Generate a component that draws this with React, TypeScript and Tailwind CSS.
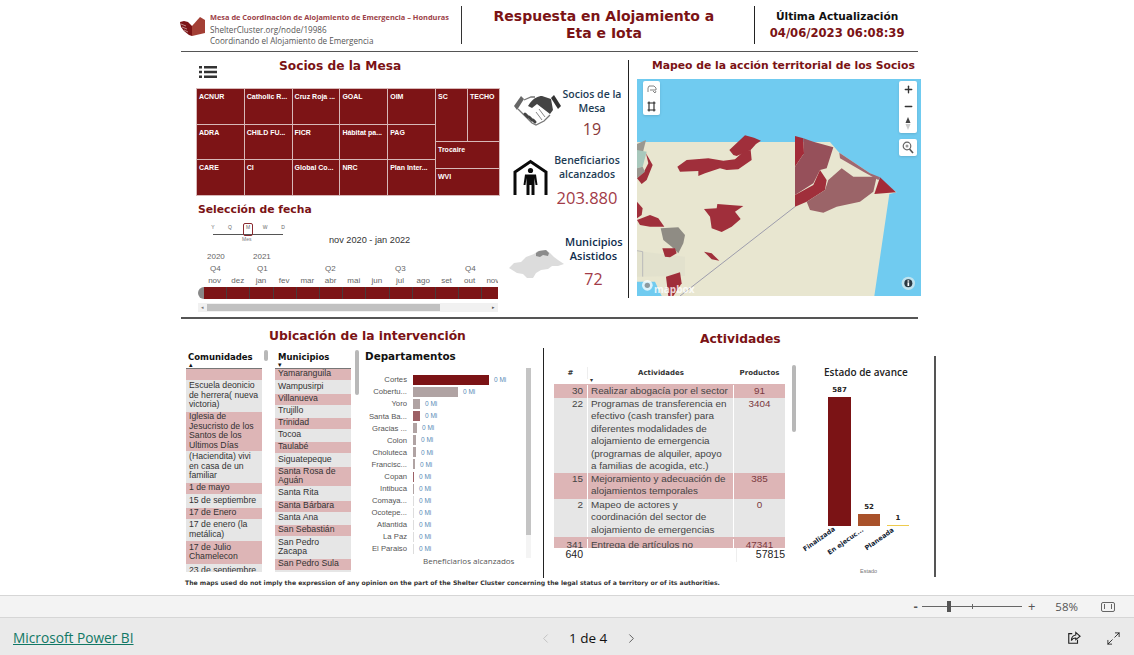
import { ChevronLeft, ChevronRight, Maximize2, Plus, Minus } from 'lucide-react'

const partners = [
  ['ACNUR', 'Catholic R...', 'Cruz Roja ...', 'GOAL', 'OIM'],
  ['ADRA', 'CHILD FU...', 'FICR', 'Hábitat pa...', 'PAG'],
  ['CARE', 'CI', 'Global Co...', 'NRC', 'Plan Inter...'],
]

const months = ['nov', 'dez', 'jan', 'fev', 'mar', 'abr', 'mai', 'jun', 'jul', 'ago', 'set', 'out', 'nov']

const comunidades = [
  { t: '', h: 'h-[11px]' },
  { t: 'Escuela deonicio de herrera( nueva victoria)', h: 'h-[32px]' },
  { t: 'Iglesia de Jesucristo de los Santos de los Ultimos Días', h: 'h-[39px]' },
  { t: '(Haciendita) vivi en casa de un familiar', h: 'h-[32px]' },
  { t: '1 de mayo', h: 'h-[11px]' },
  { t: '15 de septiembre', h: 'h-[14px]' },
  { t: '17 de Enero', h: 'h-[11px]' },
  { t: '17 de enero (la metálica)', h: 'h-[22px]' },
  { t: '17 de Julio Chamelecon', h: 'h-[23px]' },
  { t: '23 de septiembre', h: 'h-[14px]' },
]

const municipios = [
  { t: 'Yamaranguila', h: 'h-[11px]' },
  { t: 'Wampusirpi', h: 'h-[14px]' },
  { t: 'Villanueva', h: 'h-[11px]' },
  { t: 'Trujillo', h: 'h-[13px]' },
  { t: 'Trinidad', h: 'h-[11px]' },
  { t: 'Tocoa', h: 'h-[13px]' },
  { t: 'Taulabé', h: 'h-[11px]' },
  { t: 'Siguatepeque', h: 'h-[14px]' },
  { t: 'Santa Rosa de Aguán', h: 'h-[19px]' },
  { t: 'Santa Rita', h: 'h-[15px]' },
  { t: 'Santa Bárbara', h: 'h-[11px]' },
  { t: 'Santa Ana', h: 'h-[13px]' },
  { t: 'San Sebastián', h: 'h-[11px]' },
  { t: 'San Pedro Zacapa', h: 'h-[23px]' },
  { t: 'San Pedro Sula', h: 'h-[11px]' },
  { t: '', h: 'h-[2px]' },
]

const departamentos = [
  { n: 'Cortes', w: 'w-[76px]', c: 'bg-[#7b1315]' },
  { n: 'Cobertu...', w: 'w-[45px]', c: 'bg-[#b0a3a3]' },
  { n: 'Yoro', w: 'w-[7px]', c: 'bg-[#b0a3a3]' },
  { n: 'Santa Ba...', w: 'w-[7px]', c: 'bg-[#9c6065]' },
  { n: 'Gracias ...', w: 'w-[4px]', c: 'bg-[#b0a3a3]' },
  { n: 'Colon', w: 'w-[3px]', c: 'bg-[#b0a3a3]' },
  { n: 'Choluteca', w: 'w-[3px]', c: 'bg-[#b0a3a3]' },
  { n: 'Francisc...', w: 'w-[2px]', c: 'bg-[#b0a3a3]' },
  { n: 'Copan', w: 'w-[1px]', c: 'bg-[#9c6065]' },
  { n: 'Intibuca', w: 'w-[1px]', c: 'bg-[#b0a3a3]' },
  { n: 'Comaya...', w: 'w-[1px]', c: 'bg-[#dddddd]' },
  { n: 'Ocotepe...', w: 'w-[1px]', c: 'bg-[#dddddd]' },
  { n: 'Atlantida', w: 'w-[1px]', c: 'bg-[#dddddd]' },
  { n: 'La Paz', w: 'w-[1px]', c: 'bg-[#dddddd]' },
  { n: 'El Paraiso', w: 'w-[1px]', c: 'bg-[#dddddd]' },
]

const actividades = [
  { id: '30', t: 'Realizar abogacía por el sector', p: '91', h: 'h-[14px] pt-[1px]', pink: true },
  { id: '22', t: 'Programas de transferencia en efectivo (cash transfer) para diferentes modalidades de alojamiento de emergencia (programas de alquiler, apoyo a familias de acogida, etc.)', p: '3404', h: 'h-[75px]', pink: false },
  { id: '15', t: 'Mejoramiento y adecuación de alojamientos temporales', p: '385', h: 'h-[26px]', pink: true },
  { id: '2', t: 'Mapeo de actores y coordinación del sector de alojamiento de emergencias', p: '0', h: 'h-[38px]', pink: false },
  { id: '341', t: 'Entrega de artículos no alimentarios', p: '47341', h: 'h-[11px] pt-[2px]', pink: true },
]

function Logo() {
  return (
    <svg width="25" height="20" viewBox="0 0 25 20" className="mb-[6px] shrink-0">
      <path d="M0 6 L4 5 L8 6 L12 10 L12 20 L9 19 L4 15 L1 11 Z" fill="#7b1315" />
      <path d="M1 8 L6 10 M2 11 L7 13 M4 14 L8 16" stroke="#fff" strokeWidth="0.5" />
      <path d="M12 10 L20 1 L25 4 L25 17 L12 20 Z" fill="#a33f35" />
    </svg>
  )
}

function HandshakeIcon() {
  return (
    <svg width="48" height="36" viewBox="0 0 48 36" className="shrink-0">
      <path d="M0 13 L7 3 L10 6 L3 17 Z" fill="#666" />
      <path d="M40 2 L47 13 L44 16 L37 5 Z" fill="#333" />
      <path d="M37 6 L28 3 C24 3 20 5 16 10 L14 13 L18 15 L23 11 L36 21 L39 17 Z" fill="#444" />
      <path d="M10 7 L17 4 L21 4 M4 16 L8 20 L18 30 L22 32 L30 28 L36 22" fill="none" stroke="#777" strokeWidth="1.3" />
      <path d="M11 21 L14 24 M15 24 L18 27 M19 27 L21 29" stroke="#444" strokeWidth="3" strokeLinecap="round" />
      <path d="M25 16 L31 24 M22 19 L28 27" stroke="#888" strokeWidth="1" />
    </svg>
  )
}

function HouseIcon() {
  return (
    <svg width="35" height="37" viewBox="0 0 35 37">
      <path d="M2 36 V13 L17.5 2.5 L33 13 V36" fill="none" stroke="#0a0a0a" strokeWidth="3" />
      <circle cx="17.5" cy="11.5" r="2.6" fill="#0a0a0a" />
      <path d="M12 15.5 H23 L24.5 26 H22.5 L21.5 19 V36 H18.5 V26 H16.5 V36 H13.5 V19 L12.5 26 H10.5 Z" fill="#0a0a0a" />
    </svg>
  )
}

function HondurasIcon() {
  return (
    <svg width="57" height="30" viewBox="0 0 57 30">
      <path d="M1 19 L6 14 L13 13 L18 8 L26 5 L30 2 L38 1 L42 4 L46 8 L50 11 L56 15 L50 17 L44 17 L40 20 L33 21 L28 24 L25 29 L19 29 L15 25 L9 24 Z" fill="#dcdcdc" />
      <path d="M28 4 L31 2 L38 1 L41 4 L40 7 L35 6 L32 8 L28 7 Z" fill="#8b8b8b" />
    </svg>
  )
}

function TerritoryMap() {
  return (
    <svg width="284" height="217" viewBox="21 27 852 651" className="block">
      <rect x="21" y="27" width="852" height="651" fill="#70cbf0" />
      <path d="M21 216 L600 216 L628 248 L720 310 L800 367 L778 372 L733 678 L95 678 L75 635 L21 635 Z" fill="#e8e6d0" />
      <path d="M21 543 L165 560 L165 618 L21 620 Z" fill="#e2e1cd" />
      <path d="M21 542 L38 545 L38 620" fill="none" stroke="#a6a6b0" strokeWidth="2" />
      <path d="M495 410 L150 678" stroke="#8e8ea5" strokeWidth="2.5" fill="none" />
      <path d="M21 222 L48 210 L38 250 L21 262 Z" fill="#9a9890" />
      <path d="M21 240 L50 245 L38 290 L21 295 Z" fill="#a8c8bc" />
      <path d="M48 250 L68 285 L50 330 L35 342 L21 325 L42 305 L55 280 Z" fill="#a02f3b" />
      <path d="M21 295 L38 290 L45 305 L21 325 Z" fill="#9a9890" />
      <path d="M298 240 L345 196 L372 203 L393 212 L378 222 L362 240 L320 258 L310 255 Z" fill="#a02f3b" />
      <path d="M142 290 L170 270 L235 265 L280 272 L315 268 L340 245 L362 240 L365 270 L325 298 L290 300 L270 295 L225 310 L205 318 L205 303 L150 305 Z" fill="#a02f3b" />
      <path d="M222 417 L260 415 L262 402 L300 405 L340 408 L315 425 L332 447 L305 470 L275 486 L245 475 L240 440 Z" fill="#a02f3b" />
      <path d="M21 395 L38 415 L35 435 L21 445 Z" fill="#a02f3b" />
      <path d="M21 450 L60 435 L85 445 L103 470 L60 470 L30 465 Z" fill="#a02f3b" />
      <path d="M92 475 L145 472 L165 495 L160 520 L145 550 L125 530 L100 510 Z" fill="#8f8c84" />
      <path d="M97 535 L135 535 L140 550 L120 562 L105 560 Z" fill="#a02f3b" />
      <path d="M222 545 L245 550 L268 572 L245 568 Z" fill="#a02f3b" />
      <path d="M108 620 L150 607 L155 640 L130 678 L115 678 Z" fill="#a02f3b" />
      <path d="M495 198 L520 205 L522 250 L495 290 Z" fill="#a32b38" />
      <path d="M495 290 L522 250 L520 205 L550 215 L610 232 L590 295 L570 300 L550 340 L495 375 Z" fill="#96505a" />
      <path d="M495 375 L550 345 L570 300 L590 330 L585 360 L530 395 L495 410 Z" fill="#a02f3b" />
      <path d="M530 395 L585 360 L595 330 L635 295 L670 320 L700 320 L740 320 L730 365 L690 395 L620 410 L580 428 L540 420 Z" fill="#9b6468" />
      <path d="M750 322 L798 367 L733 372 Z" fill="#a32b38" />
      <path d="M628 248 L720 310 L750 322 L745 330 L700 305 L630 265 Z" fill="#a06870" />
      <circle cx="52" cy="646" r="16" fill="#ffffff" fillOpacity="0.75" />
      <circle cx="52" cy="646" r="8" fill="#8d9aa0" />
      <circle cx="835" cy="640" r="20" fill="#bfe3ef" />
      <circle cx="835" cy="640" r="12" fill="#2a3a44" />
      <rect x="832.5" y="637" width="5" height="11" fill="#ffffff" />
      <rect x="832.5" y="631" width="5" height="4" fill="#ffffff" />
    </svg>
  )
}

function ListRows({ rows }: { rows: { t: string; h: string }[] }) {
  return (
    <div className="h-[203px] overflow-hidden">
      {rows.map((r, i) => (
        <div
          key={i}
          className={`${r.h} overflow-hidden px-[3px] text-[8.7px] leading-[9.5px] text-[#333] flex items-center ${i % 2 === 0 ? 'bg-[#ddb5b6]' : 'bg-[#e6e6e6]'}`}
        >
          <span>{r.t}</span>
        </div>
      ))}
    </div>
  )
}

function App() {
  return (
    <div className="flex h-[655px] w-[1134px] flex-col overflow-hidden bg-white font-['Liberation_Sans',sans-serif]">
      <div className="relative h-[595px] pl-[180px]">
        {/* header */}
        <div className="flex h-[50.5px] w-[738px] items-center">
          <div className="flex w-[281px] items-center gap-[5px] pt-[8px]">
            <Logo />
            <div className="font-['Open_Sans',sans-serif] text-[8.1px] leading-[11.5px] text-[#555]">
              <div className="whitespace-nowrap text-[7.4px] font-bold text-[#9c4248]">Mesa de Coordinación de Alojamiento de Emergencia – Honduras</div>
              <div>ShelterCluster.org/node/19986</div>
              <div>Coordinando el Alojamiento de Emergencia</div>
            </div>
          </div>
          <div className="h-[38px] w-[1px] bg-[#333]" />
          <div className="w-[293px] pb-[1px] pr-[8px] text-center font-['DejaVu_Sans',sans-serif] text-[14px] font-bold leading-[16.5px] text-[#7b1315]">
            Respuesta en Alojamiento a<br />Eta e Iota
          </div>
          <div className="h-[38px] w-[1px] bg-[#222]" />
          <div className="w-[163px] pl-[1px] text-center font-['DejaVu_Sans',sans-serif] font-bold">
            <div className="text-[10.6px] leading-[17px] text-[#111]">Última Actualización</div>
            <div className="text-[11.6px] leading-[17px] text-[#7b1315]">04/06/2023 06:08:39</div>
          </div>
        </div>
        <div className="ml-[1px] h-[1.5px] w-[737px] bg-[#555]" />

        {/* partners, date slicer, stats, map */}
        <div className="flex h-[265px] w-[760px]">
          <div className="w-[320px] shrink-0 pl-[16px]">
            <div className="relative h-[36px]">
              <svg width="18" height="12" viewBox="0 0 18 12" className="absolute left-[3px] top-[14px]">
                <path d="M0 0h3v2.5H0zM5 0h13v2.5H5zM0 4.7h3v2.5H0zM5 4.7h13v2.5H5zM0 9.4h3v2.5H0zM5 9.4h13v2.5H5z" fill="#333" />
              </svg>
              <div className="pl-[83px] pt-[5px] font-['DejaVu_Sans',sans-serif] text-[12.2px] font-bold text-[#7b1315]">Socios de la Mesa</div>
            </div>
            <div className="flex h-[108px] w-[304px] border-b border-r border-[#d8b8b8] text-[7px] font-bold text-white">
              <div className="grid w-[240px] grid-cols-5 grid-rows-3">
                {partners.flat().map(p => (
                  <div key={p} className="overflow-hidden border-l border-t border-[#d8b8b8] bg-[#7d1416] px-[2px] pt-[3px]">{p}</div>
                ))}
              </div>
              <div className="flex w-[64px] flex-col">
                <div className="flex h-[54px]">
                  <div className="w-[32px] border-l border-t border-[#d8b8b8] bg-[#7d1416] px-[2px] pt-[3px]">SC</div>
                  <div className="w-[32px] border-l border-t border-[#d8b8b8] bg-[#7d1416] px-[2px] pt-[3px]">TECHO</div>
                </div>
                <div className="h-[27px] border-l border-t border-[#d8b8b8] bg-[#7d1416] px-[2px] pt-[3px]">Trocaire</div>
                <div className="h-[27px] border-l border-t border-[#d8b8b8] bg-[#7d1416] px-[2px] pt-[3px]">WVI</div>
              </div>
            </div>
            <div className="pl-[2px] pt-[7px] font-['DejaVu_Sans',sans-serif] text-[10.8px] font-bold leading-[14px] text-[#7b1315]">Selección de fecha</div>
            <div className="relative h-[34px] w-[304px]">
              <div className="absolute left-[17px] top-[17px] h-px w-[70px] bg-[#555]" />
              {[['Y', 'left-[13px]'], ['Q', 'left-[30px]'], ['M', 'left-[48px]'], ['W', 'left-[65px]'], ['D', 'left-[83px]']].map(([l, pos]) => (
                <span key={l} className={`absolute ${pos} top-[7px] w-[8px] text-center text-[5px] text-[#666]`}>{l}</span>
              ))}
              <div className="absolute left-[47px] top-[6px] h-[13px] w-[10px] rounded-[2px] border border-[#8b2a30]" />
              <span className="absolute left-[46px] top-[19px] text-[5px] text-[#777]">Mes</span>
              <span className="absolute left-[133px] top-[17px] whitespace-nowrap text-[9.2px] text-[#333]">nov 2020 - jan 2022</span>
            </div>
            <div className="w-[302px] overflow-hidden pl-[2px] text-[8px] text-[#666]">
              <div className="flex h-[12px] items-center pl-[9px]">
                <span className="w-[46px]">2020</span>
                <span>2021</span>
              </div>
              <div className="flex h-[12px] items-center pl-[12px]">
                <span className="w-[47px]">Q4</span>
                <span className="w-[68px]">Q1</span>
                <span className="w-[70px]">Q2</span>
                <span className="w-[70px]">Q3</span>
                <span>Q4</span>
              </div>
              <div className="flex h-[12px] w-[320px] items-center pl-[5px]">
                {months.map((m, i) => (
                  <span key={i} className="w-[23.2px] shrink-0 text-center">{m}</span>
                ))}
              </div>
              <div className="flex h-[12px] w-[300px] overflow-hidden rounded-l-full bg-[#888]">
                <div className="w-[6px] shrink-0" />
                {months.map((m, i) => (
                  <div key={i} className="h-full w-[23.2px] shrink-0 border-r border-[#4a3a3a] bg-[#7d1416]" />
                ))}
              </div>
            </div>
            <div className="mt-[4px] ml-[2px] flex h-[9px] w-[300px] items-center bg-[#f1f1f1] px-[3px]">
              <span className="text-[5px] text-[#777]">◂</span>
              <div className="ml-[3px] h-[7px] w-[233px] bg-[#c1c1c1]" />
              <span className="ml-auto text-[5px] text-[#555]">▸</span>
            </div>
          </div>

          <div className="w-[128px] shrink-0 pl-[7px] pt-[35px] font-['Open_Sans',sans-serif] text-[10.5px] font-semibold leading-[14px] text-[#1d3c55]">
            <div className="flex h-[66px] items-start">
              <div className="ml-[7px] mt-[6px] shrink-0"><HandshakeIcon /></div>
              <div className="w-[60px] text-center">
                <div>Socios de la<br />Mesa</div>
                <div className="mt-[5px] text-[16px] font-normal leading-[18px] text-[#8a3a3a]">19</div>
              </div>
            </div>
            <div className="flex h-[82px] items-start">
              <div className="ml-[6px] mt-[6px] shrink-0"><HouseIcon /></div>
              <div className="ml-[-1px] w-[80px] text-center">
                <div>Beneficiarios<br />alcanzados</div>
                <div className="mt-[6px] text-[16.5px] font-normal leading-[22px] text-[#a23b48]">203.880</div>
              </div>
            </div>
            <div className="flex items-start">
              <div className="ml-[1px] mt-[14px] shrink-0"><HondurasIcon /></div>
              <div className="w-[57px] shrink-0 text-center text-[#0f2d4d]">
                <div className="text-[11px]">Municipios<br />Asistidos</div>
                <div className="mt-[7px] text-[16px] font-normal leading-[18px] text-[#a23b48]">72</div>
              </div>
            </div>
          </div>

          <div className="mt-[8px] h-[238px] w-px shrink-0 bg-[#222]" />

          <div className="pl-[8px]">
            <div className="pl-[15px] pt-[6px] font-['DejaVu_Sans',sans-serif] text-[10.8px] font-semibold leading-[15px] whitespace-nowrap text-[#7b1315]">Mapeo de la acción territorial de los Socios</div>
            <div className="relative mt-[6px] h-[217px] w-[284px] overflow-hidden">
              <TerritoryMap />
              <div className="absolute left-[6px] top-[2px] flex h-[34px] w-[17px] flex-col items-center rounded-[2px] bg-white text-[#444] shadow-sm">
                <svg width="11" height="17" viewBox="0 0 11 17"><path d="M2 11 V7 L3 5 H8 L10 7 V9 H4 M7 10 L9 12 L10 10" fill="none" stroke="#666" strokeWidth="0.8" /></svg>
                <svg width="9" height="17" viewBox="0 0 9 17"><path d="M2 5 H7 V12 H2 Z M0.5 5 H8.5 M0.5 12 H8.5 M2 3.5 V13.5 M7 3.5 V13.5" fill="none" stroke="#222" strokeWidth="1.1" /></svg>
              </div>
              <div className="absolute right-[4px] top-[2px] flex h-[52px] w-[18px] flex-col items-center rounded-[2px] bg-white text-[#333] shadow-sm">
                <Plus size={11} strokeWidth={3} className="mt-[3px] mb-[6px]" />
                <Minus size={11} strokeWidth={3} className="mb-[5px]" />
                <svg width="6" height="13" viewBox="0 0 6 13"><path d="M3 0 L5.5 6 H0.5 Z" fill="#444" /><path d="M3 13 L5.5 7 H0.5 Z" fill="#ccc" /></svg>
              </div>
              <div className="absolute right-[4px] top-[60px] flex h-[17px] w-[18px] items-center justify-center rounded-[2px] bg-white shadow-sm">
                <svg width="12" height="13" viewBox="0 0 12 13"><circle cx="5" cy="5" r="3.8" fill="none" stroke="#666" strokeWidth="1.2" /><circle cx="5" cy="5" r="1.5" fill="#999" /><path d="M7.5 8 L11 12" stroke="#555" strokeWidth="1.6" /></svg>
              </div>
              <span className="absolute bottom-[2px] left-[17px] font-['Open_Sans',sans-serif] text-[10px] font-bold leading-[10px] text-white opacity-80">mapbox</span>
            </div>
          </div>
        </div>

        {/* location tables, departments, activities, status */}
        <div className="flex h-[263px] w-[756px]">
          <div className="relative w-[363px] shrink-0">
            <div className="ml-[1px] h-[1.5px] w-[737px] bg-[#555]" />
            <div className="pl-[89px] pt-[10px] font-['DejaVu_Sans',sans-serif] text-[12.3px] font-semibold leading-[15px] text-[#7b1315]">Ubicación de la intervención</div>
            <div className="mt-[7px] flex">
              <div className="ml-[6px] w-[76px]">
                <div className="relative h-[18px] border-b border-[#777] pl-[2px] font-['DejaVu_Sans',sans-serif] text-[8.5px] font-bold text-[#111]">
                  Comunidades
                  <span className="absolute bottom-0 left-[3px] text-[7px] leading-[6px]">▴</span>
                </div>
                <ListRows rows={comunidades} />
              </div>
              <div className="relative ml-[13px] w-[76px]">
                <div className="relative h-[18px] border-b border-[#777] pl-[3px] font-['DejaVu_Sans',sans-serif] text-[8.5px] font-bold text-[#111]">
                  Municipios
                  <span className="absolute bottom-0 left-[3px] text-[7px] leading-[6px]">▾</span>
                </div>
                <ListRows rows={municipios} />
              </div>
              <div className="relative pl-[14px]">
                <div className="mt-[-3px] whitespace-nowrap pt-[1px] font-['DejaVu_Sans',sans-serif] text-[10.4px] font-bold text-[#111]">Departamentos</div>
                <div className="mt-[10px] w-[170px]">
                  {departamentos.map(d => (
                    <div key={d.n} className="flex h-[12.05px] items-center text-[7.7px]">
                      <span className="w-[42px] shrink-0 whitespace-nowrap text-right text-[#555]">{d.n}</span>
                      <div className={`ml-[6px] h-[10px] shrink-0 ${d.w} ${d.c}`} />
                      <span className="ml-[5px] whitespace-nowrap text-[6.5px] text-[#5b8db8]">0 Mi</span>
                    </div>
                  ))}
                  <div className="pl-[58px] font-['Open_Sans',sans-serif] whitespace-nowrap text-[8px] text-[#555]">Beneficiarios alcanzados</div>
                </div>
                <div className="absolute left-[175px] top-[17px] h-[190px] w-[5px] bg-[#f4f4f4]">
                  <div className="h-[167px] w-full bg-[#c4c4c4]" />
                </div>
              </div>
            </div>
            <div className="absolute left-[84px] top-[33px] h-[11px] w-[4px] rounded-full bg-[#b8b8b8]" />
            <div className="absolute left-[175px] top-[33px] h-[45px] w-[4px] rounded-full bg-[#b8b8b8]" />
          </div>

          <div className="mt-[31px] h-[230px] w-px shrink-0 bg-[#222]" />

          <div className="relative flex-1 pt-[1.5px]">
            <div className="pl-[156px] pt-[13px] font-['DejaVu_Sans',sans-serif] text-[12.3px] font-semibold leading-[15px] text-[#7b1315]">Actividades</div>
            <div className="ml-[10px] mt-[18px] w-[231px] text-[9.9px] leading-[12.5px] text-[#444]">
              <div className="flex h-[19px] items-start pt-[2px] font-['DejaVu_Sans',sans-serif] text-[7px] font-bold text-[#333]">
                <span className="w-[33px] text-center">#</span>
                <span className="relative w-[147px] border-l border-[#eee] text-center">
                  Actividades
                  <span className="absolute left-[2px] top-[7px] text-[6px]">▾</span>
                </span>
                <span className="flex-1 text-center">Productos</span>
              </div>
              {actividades.map(a => (
                <div key={a.id} className={`flex overflow-hidden ${a.h} ${a.pink ? 'bg-[#ddb5b6]' : 'bg-[#e6e6e6]'}`}>
                  <span className="w-[33px] shrink-0 pr-[4px] text-right">{a.id}</span>
                  <span className="w-[147px] shrink-0 border-x border-white pl-[3px] pr-[4px]">{a.t}</span>
                  <span className="flex-1 text-center text-[#7b3a40]">{a.p}</span>
                </div>
              ))}
              <div className="flex h-[14px] text-[10.5px] text-[#222]">
                <span className="w-[29px] text-right">640</span>
                <span className="flex-1 border-r border-[#eee]" />
                <span className="w-[48px] text-right">57815</span>
              </div>
            </div>
            <div className="absolute left-[248px] top-[48px] h-[67px] w-[4px] rounded-full bg-[#b8b8b8]" />

            {/* status chart */}
            <div className="absolute left-[280px] top-[48px] h-[215px] w-[100px]">
              <div className="font-['Open_Sans',sans-serif] whitespace-nowrap text-[10px] font-semibold leading-[14px] text-[#222]">Estado de avance</div>
              <div className="absolute left-[4px] top-[15px] flex h-[146px] items-end gap-[7px] text-center font-['DejaVu_Sans',sans-serif] text-[7px] font-bold leading-[9px] text-[#222]">
                <div className="w-[23px]">587<div className="mt-[2px] h-[129px] bg-[#7b1315]" /></div>
                <div className="w-[22px]">52<div className="mt-[2px] h-[12px] bg-[#a9522a]" /></div>
                <div className="w-[22px]">1<div className="mt-[2px] h-px bg-[#eecb4e]" /></div>
              </div>
              <div className="font-['DejaVu_Sans',sans-serif] text-[6.5px] font-bold text-[#123]">
                <span className="absolute left-[-23px] top-[170px] -rotate-[35deg] whitespace-nowrap">Finalizada</span>
                <span className="absolute left-[1px] top-[172px] -rotate-[35deg] whitespace-nowrap">En ejecuc...</span>
                <span className="absolute left-[39px] top-[170px] -rotate-[35deg] whitespace-nowrap">Planeada</span>
              </div>
              <span className="absolute left-[36px] top-[202px] text-[5.5px] text-[#777]">Estado</span>
            </div>
            <div className="absolute left-[390px] top-[39px] h-[221px] w-[2px] bg-[#555]" />
          </div>
        </div>

        <div className="absolute left-[185px] top-[578px] whitespace-nowrap font-['DejaVu_Sans',sans-serif] text-[6.13px] font-bold text-[#333]">
          The maps used do not imply the expression of any opinion on the part of the Shelter Cluster concerning the legal status of a territory or of its authorities.
        </div>
      </div>

      {/* zoom bar */}
      <div className="flex h-[23px] items-center justify-end border-y border-[#d6d6d6] bg-[#f3f3f3] pr-[19px] text-[#555]">
        <span className="text-[13px] font-bold leading-none">-</span>
        <div className="relative ml-[4px] h-px w-[100px] bg-[#666]">
          <div className="absolute left-[25px] top-[-5px] h-[11px] w-[4px] bg-[#555]" />
          <div className="absolute left-[50px] top-[-2px] h-[5px] w-px bg-[#666]" />
        </div>
        <span className="ml-[6px] font-['Open_Sans',sans-serif] text-[13px] leading-none">+</span>
        <span className="ml-[20px] font-['Open_Sans',sans-serif] text-[11.5px]">58%</span>
        <div className="ml-[23px] flex h-[10px] w-[14px] items-center justify-center rounded-[2px] border border-[#666]">
          <div className="h-[5px] w-[8px] border-x border-[#666]" />
        </div>
      </div>

      {/* footer */}
      <div className="relative flex flex-1 items-center bg-[#eaeaea] pl-[13px] pt-[3px]">
        <a href="#" className="font-['Open_Sans',sans-serif] text-[13.7px] text-[#117865] underline">Microsoft Power BI</a>
        <div className="absolute left-[538px] flex items-center text-[13.5px] font-['Open_Sans',sans-serif] text-[#111]">
          <ChevronLeft size={15} strokeWidth={1.2} className="text-[#b5b5b5]" />
          <span className="ml-[16px] w-[46px]">1 de 4</span>
          <ChevronRight size={15} strokeWidth={1.2} className="ml-[9px] text-[#333]" />
        </div>
        <div className="absolute left-[1067px] flex items-center">
          <svg width="14" height="14" viewBox="0 0 16 16">
            <path d="M6 3 H2 V14 H12 V10" fill="none" stroke="#222" strokeWidth="1.3" />
            <path d="M10 1.5 L15 6 L10 10 V8 C7.5 8 6 9 5 11 C5 7.5 7 5 10 4.5 Z" fill="none" stroke="#222" strokeWidth="1.2" />
          </svg>
        </div>
        <Maximize2 size={15} strokeWidth={1.3} className="absolute left-[1106px] text-[#111]" />
      </div>
    </div>
  )
}

export default App
